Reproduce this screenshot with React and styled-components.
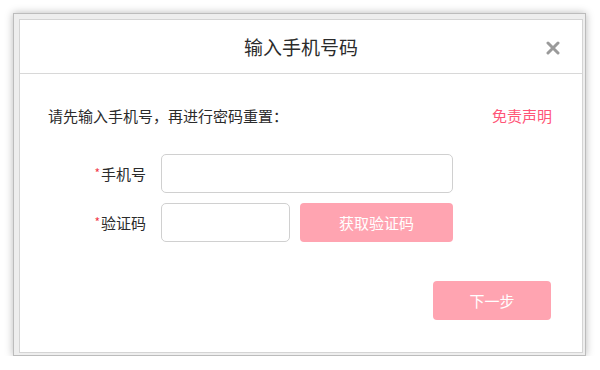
import React from 'react';
import styled, { createGlobalStyle } from 'styled-components';

const GlobalStyle = createGlobalStyle`
  body {
    margin: 0;
    background: #fff;
    font-family: "Noto Sans CJK SC", "Noto Sans", sans-serif;
    color: #333;
  }
`;

const Frame = styled.div`
  box-sizing: border-box;
  margin: 13px 0 0 13px;
  width: 573px;
  height: 343px;
  padding: 5px 2px 2px 5px;
  background: #eeeeee;
  border: 1px solid #bcbcbc;
  box-shadow: 0 0 8px rgba(0, 0, 0, 0.28);
`;

const Panel = styled.div`
  box-sizing: border-box;
  height: 100%;
  background: #fff;
  border: 1px solid #d4d4d4;
  display: flex;
  flex-direction: column;
`;

const Header = styled.div`
  position: relative;
  height: 53px;
  display: flex;
  align-items: center;
  justify-content: center;
  border-bottom: 1px solid #d8d8d8;
`;

const Title = styled.h2`
  margin: 0;
  font-size: 19px;
  font-weight: normal;
  color: #2b2b2b;
`;

const CloseButton = styled.button`
  position: absolute;
  right: 22px;
  top: 21px;
  width: 14px;
  height: 14px;
  padding: 0;
  border: 0;
  background: none;
  cursor: pointer;
  display: flex;
`;

const Body = styled.div`
  padding: 32px 30px 0 28px;
  display: flex;
  flex-direction: column;
`;

const Intro = styled.div`
  display: flex;
  justify-content: space-between;
  align-items: center;
  font-size: 15px;
  line-height: 20px;
  color: #2b2b2b;
`;

const Disclaimer = styled.a`
  color: #ff5577;
  font-size: 15px;
  text-decoration: none;
`;

const Form = styled.div`
  margin-top: 28px;
  display: flex;
  flex-direction: column;
  gap: 10px;
`;

const Row = styled.div`
  display: flex;
  align-items: center;
`;

const Label = styled.label`
  width: 98px;
  margin-right: 15px;
  text-align: right;
  font-size: 15px;
  color: #2b2b2b;

  &::before {
    content: '*';
    color: #f23a4c;
    font-size: 12px;
    margin-right: 1px;
    vertical-align: 2px;
  }
`;

const Input = styled.input`
  box-sizing: border-box;
  width: ${({ $width }) => $width}px;
  height: 39px;
  border: 1px solid #d0d0d0;
  border-radius: 5px;
  padding: 0 10px;
  font-size: 15px;
  outline: none;
`;

const PinkButton = styled.button`
  box-sizing: border-box;
  width: ${({ $width }) => $width}px;
  height: 39px;
  border: 0;
  border-radius: 4px;
  background: #ffa4b1;
  color: #fff;
  font-family: inherit;
  font-size: 15px;
  margin-left: ${({ $gap }) => $gap || 0}px;
`;

const Footer = styled.div`
  margin-top: 39px;
  display: flex;
  justify-content: flex-end;
  padding-right: 1px;
`;

function App() {
  return (
    <>
      <GlobalStyle />
      <Frame>
        <Panel>
          <Header>
            <Title>输入手机号码</Title>
            <CloseButton aria-label="关闭">
              <svg width="14" height="14" viewBox="0 0 14 14">
                <path d="M2 2 L12 12 M12 2 L2 12" stroke="#9a9a9a" strokeWidth="3" strokeLinecap="round" />
              </svg>
            </CloseButton>
          </Header>
          <Body>
            <Intro>
              <span>请先输入手机号，再进行密码重置：</span>
              <Disclaimer href="#">免责声明</Disclaimer>
            </Intro>
            <Form>
              <Row>
                <Label>手机号</Label>
                <Input $width={292} />
              </Row>
              <Row>
                <Label>验证码</Label>
                <Input $width={129} />
                <PinkButton $width={153} $gap={10}>获取验证码</PinkButton>
              </Row>
            </Form>
            <Footer>
              <PinkButton $width={118}>下一步</PinkButton>
            </Footer>
          </Body>
        </Panel>
      </Frame>
    </>
  );
}

export default App;
